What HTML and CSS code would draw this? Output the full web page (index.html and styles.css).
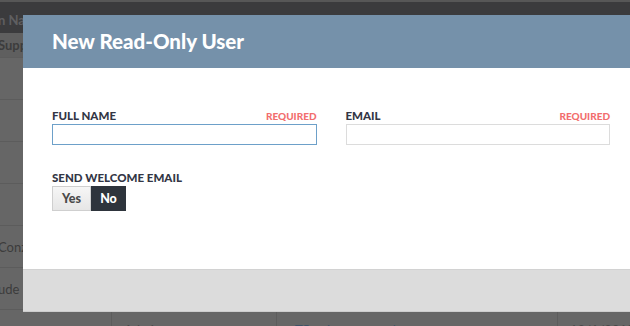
FILE: index.html
```html
<!DOCTYPE html>
<html lang="en">
<head>
  <meta charset="UTF-8">
  <title>Users</title>
  <link rel="stylesheet" href="styles.css">
</head>
<body>
  <!-- pagina atras do modal (ja escurecida) -->
  <div class="page">
    <div class="topline"></div>
    <div class="row head">
      <div class="cell c1">n Name</div>
      <div class="cell c2">Default Role</div>
      <div class="cell c3">Username</div>
      <div class="cell c4">Last Login</div>
    </div>
    <div class="row first">
      <div class="cell c1 bold">Supp</div>
      <div class="cell c2"></div>
      <div class="cell c3"></div>
      <div class="cell c4"></div>
    </div>
    <div class="row"><div class="cell c1"></div><div class="cell c2"></div><div class="cell c3"></div><div class="cell c4"></div></div>
    <div class="row"><div class="cell c1"></div><div class="cell c2"></div><div class="cell c3"></div><div class="cell c4"></div></div>
    <div class="row"><div class="cell c1"></div><div class="cell c2"></div><div class="cell c3"></div><div class="cell c4"></div></div>
    <div class="row"><div class="cell c1"></div><div class="cell c2"></div><div class="cell c3"></div><div class="cell c4"></div></div>
    <div class="row"><div class="cell c1">Conz</div><div class="cell c2"></div><div class="cell c3"></div><div class="cell c4"></div></div>
    <div class="row"><div class="cell c1">ude</div><div class="cell c2"></div><div class="cell c3"></div><div class="cell c4"></div></div>
    <div class="row last">
      <div class="cell c1"></div>
      <div class="cell c2">Admin</div>
      <div class="cell c3 link">Tfleming@example.com</div>
      <div class="cell c4">12/1/2015</div>
    </div>
  </div>

  <!-- MODAL -->
  <div class="modal">
    <div class="modal-header">
      <h2>New Read-Only User</h2>
    </div>
    <div class="modal-body">
      <div class="fields">
        <div class="field">
          <div class="label-row">
            <label for="fullName">Full Name</label>
            <span class="required">Required</span>
          </div>
          <input id="fullName" class="input focused" type="text">
        </div>
        <div class="field">
          <div class="label-row">
            <label for="email">Email</label>
            <span class="required">Required</span>
          </div>
          <input id="email" class="input" type="text">
        </div>
      </div>
      <div class="label-row">
        <label>Send Welcome Email</label>
      </div>
      <div class="toggle">
        <button class="opt">Yes</button>
        <button class="opt active">No</button>
      </div>
    </div>
    <div class="modal-footer"></div>
  </div>
</body>
</html>
```

FILE: styles.css
```css
* {
  margin: 0;
  padding: 0;
  box-sizing: border-box;
}
html, body {
  height: 100%;
}
body {
  font-family: 'Lato', 'Liberation Sans', sans-serif;
  background-color: #666666;
  overflow: hidden;
  position: relative;
}

/* Pagina de fundo */
.page {
  width: 630px;
  height: 100%;
  overflow: hidden;
}
.topline {
  height: 2px;
  background-color: #575757;
}
.row {
  display: flex;
  height: 42px;
  border-bottom: 1px solid #5c5c5c;
  background-color: #666666;
}
.row.head {
  height: 31px;
  background-color: #3b3b3d;
  border-bottom: none;
  align-items: flex-start;
}
.row.head .cell {
  padding-top: 10px;
  border-right: none;
  font-weight: 700;
  color: #5f5f61;
}
.row.first {
  height: 25px;
  background-color: #5f5f5f;
}
.cell {
  display: flex;
  align-items: center;
  font-size: 13px;
  color: #3c3c3c;
  white-space: nowrap;
  overflow: hidden;
  border-right: 1px solid #5c5c5c;
}
.cell.bold {
  font-weight: 700;
}
.c1 {
  width: 114px;
  margin-left: -2px;
}
.c2 {
  width: 165px;
  padding-left: 12px;
}
.c3 {
  width: 281px;
  padding-left: 18px;
}
.c4 {
  flex: 1;
  padding-left: 12px;
  border-right: none;
}
.row.last .cell {
  align-items: flex-start;
  padding-top: 12px;
  color: #4a4a4a;
}
.row.last .cell.link {
  color: #3e5266;
}

/* Modal */
.modal {
  position: absolute;
  left: 23px;
  top: 15px;
  width: 616px;
  background-color: #ffffff;
}
.modal-header {
  height: 53px;
  background-color: #7591aa;
  padding: 14px 29px 0;
}
.modal-header h2 {
  color: #ffffff;
  font-size: 20.5px;
  font-weight: 900;
  line-height: 25px;
}
.modal-body {
  height: 201px;
  padding: 40px 29px 0;
}
.fields {
  display: flex;
  gap: 29px;
  margin-bottom: 25px;
}
.field {
  flex: 1;
}
.label-row {
  display: flex;
  justify-content: space-between;
  align-items: center;
  height: 15px;
  margin-bottom: 1px;
}
.label-row label {
  font-size: 11.5px;
  font-weight: 900;
  color: #333645;
  text-transform: uppercase;
}
.required {
  font-size: 10px;
  font-weight: 900;
  color: #f26e6e;
  text-transform: uppercase;
}
.input {
  display: block;
  width: 100%;
  height: 21px;
  border: 1px solid #dcdcdc;
  outline: none;
  background-color: #ffffff;
}
.input.focused {
  border-color: #6da0c9;
}
.toggle {
  display: flex;
}
.opt {
  height: 25px;
  font-family: inherit;
  font-size: 12.5px;
  font-weight: 900;
  border: 1px solid #cfcfcf;
  background: linear-gradient(#f6f6f6, #e6e6e6);
  color: #4a4a4a;
  width: 39px;
}
.opt.active {
  width: 35px;
  background: #2e343c;
  border-color: #2e343c;
  color: #ffffff;
}
.modal-footer {
  height: 43px;
  background-color: #dcdcdc;
  border-top: 1px solid #d2d2d2;
  border-bottom: 1px solid #cdcdcd;
}
```
